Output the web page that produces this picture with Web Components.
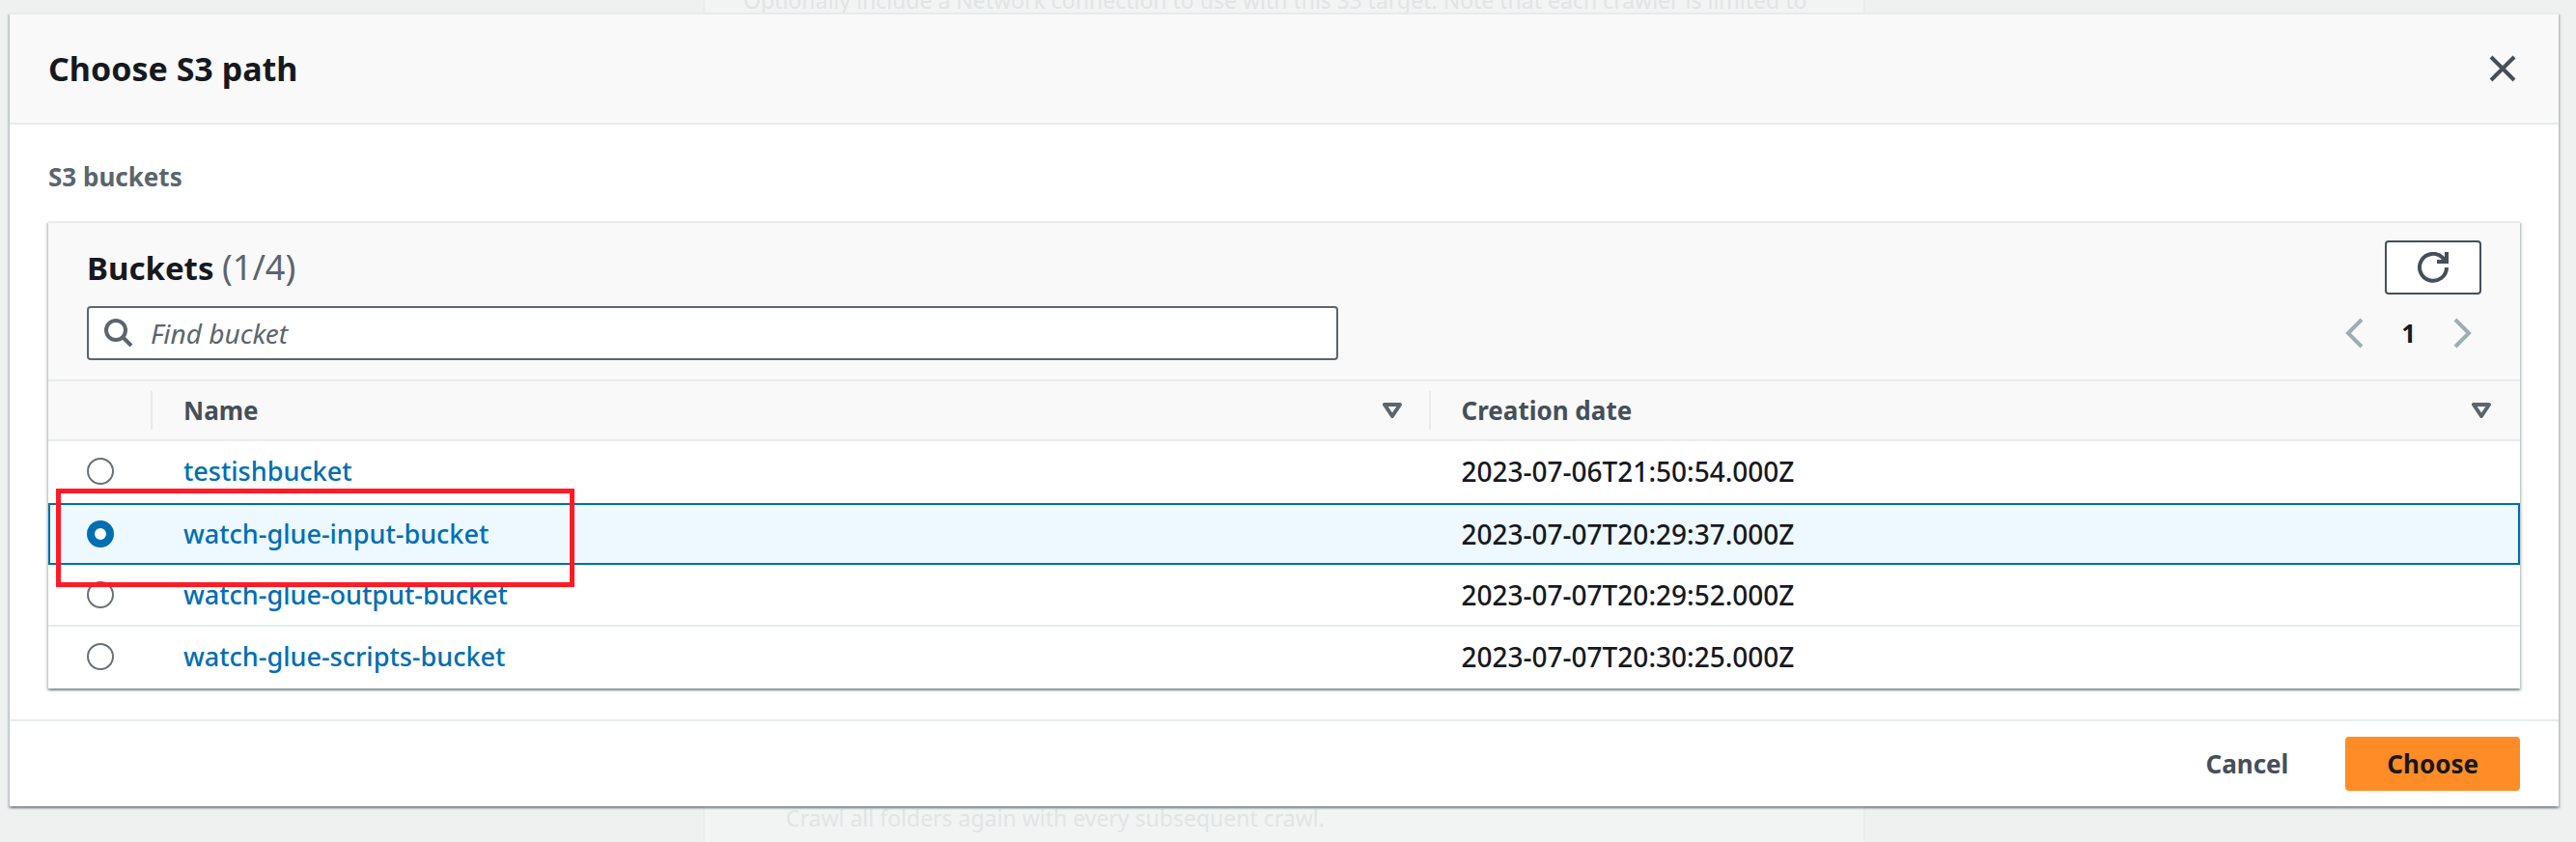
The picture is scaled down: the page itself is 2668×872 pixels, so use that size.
<!DOCTYPE html>
<html lang="en">
<head>
<meta charset="utf-8">
<title>Choose S3 path</title>
<style>
  html, body { margin: 0; }
  body {
    background: #eff1f1;
    color: #16191f;
    font-family: "Noto Sans", "Open Sans", sans-serif;
    font-size: 26px;
    line-height: 36px;
  }
</style>
</head>
<body>
<app-stage>
  <crawler-page slot="page"></crawler-page>
  <path-dialog heading="Choose S3 path">
    <bucket-panel></bucket-panel>
    <ui-button slot="actions" variant="link">Cancel</ui-button>
    <ui-button slot="actions" variant="primary">Choose</ui-button>
  </path-dialog>
</app-stage>

<script>
const define = (name, html, setup) => {
  const template = document.createElement('template');
  template.innerHTML = html;
  customElements.define(name, class extends HTMLElement {
    constructor() {
      super();
      this.attachShadow({ mode: 'open' }).append(template.content.cloneNode(true));
    }
    connectedCallback() {
      if (setup) setup(this, this.shadowRoot);
    }
  });
};

/* Stacks the dimmed page and the dialog in one grid cell */
define('app-stage', `
  <style>
    :host { display: grid; min-height: 100vh; padding: 0 18px 0 10px; box-sizing: border-box; overflow: hidden; }
    ::slotted(*), .front { grid-area: 1 / 1; min-width: 0; }
    .front { align-self: start; padding: 13px 0 36px; z-index: 1; }
  </style>
  <slot name="page"></slot>
  <div class="front"><slot></slot></div>
`);

/* The crawler form behind the dialog */
define('crawler-page', `
  <style>
    :host {
      display: flex; flex-direction: column; justify-content: space-between;
      justify-self: center; width: 1200px; max-width: 100%;
      background: #f1f4f3; border: solid #eaeded; border-width: 0 2px;
      color: #e1e4e5; font-size: 23px; line-height: 28px;
    }
    p { margin: 0; }
    .hint { margin-top: -14px; padding-left: 40px; white-space: nowrap; }
    .note { padding: 0 0 11px 84px; }
  </style>
  <p class="hint">Optionally include a Network connection to use with this S3 target. Note that each crawler is limited to</p>
  <p class="note">Crawl all folders again with every subsequent crawl.</p>
`);

define('path-dialog', `
  <style>
    :host {
      display: block; background: #fff; border-top: 2px solid #e7ebeb;
      box-shadow: 0 2px 2px rgba(0,28,36,.3), 2px 2px 2px rgba(0,28,36,.15), -2px 2px 2px rgba(0,28,36,.15);
    }
    header {
      display: flex; align-items: center; justify-content: space-between;
      height: 112px; padding: 0 40px; background: #f9f9f9; border-bottom: 2px solid #e7ebeb;
    }
    h1 { margin: 0; font-size: 34px; line-height: 44px; font-weight: 700; }
    .close { display: grid; place-items: center; width: 36px; height: 36px; padding: 0; border: 0; background: none; color: #464f58; }
    section { padding: 36px 40px 32px; }
    footer {
      display: flex; justify-content: flex-end; gap: 16px;
      padding: 16px 40px; border-top: 2px solid #e7ebeb;
    }
  </style>
  <header>
    <h1></h1>
    <button class="close" type="button" aria-label="Close">
      <svg width="32" height="32" viewBox="0 0 32 32" fill="none" stroke="currentColor" stroke-width="4"><path d="M4 4 28 28M28 4 4 28"/></svg>
    </button>
  </header>
  <section><slot></slot></section>
  <footer><slot name="actions"></slot></footer>
`, (el, root) => { root.querySelector('h1').textContent = el.getAttribute('heading'); });

define('ui-button', `
  <style>
    :host { display: block; }
    button {
      height: 56px; padding: 0 41px; border: 2px solid transparent; border-radius: 4px;
      background: none; color: #464f58; font: inherit; font-weight: 700;
    }
    :host([variant="primary"]) button { background: #ff8c27; border-color: #ff8c27; color: #16191f; }
  </style>
  <button type="button"><slot></slot></button>
`);

define('bucket-panel', `
  <style>
    :host { display: block; }
    h2 { margin: 0 0 28px; font-size: 26px; line-height: 36px; color: #5b656d; }
    .card {
      background: #fff; border-top: 2px solid #e7ebeb;
      box-shadow: 0 2px 2px rgba(0,28,36,.3), 2px 2px 2px rgba(0,28,36,.15), -2px 2px 2px rgba(0,28,36,.15);
    }
    .tools { display: grid; gap: 12px; padding: 18px 40px 20px; background: #f9f9f9; }
    .row { display: flex; align-items: center; justify-content: space-between; height: 56px; }
    h3 { margin: 0; font-size: 33px; line-height: 44px; }
    h3 span { font-size: 36px; font-weight: 400; color: #5b656d; }
    .refresh {
      display: grid; place-items: center; width: 100px; height: 56px; padding: 0;
      background: #fff; border: 2px solid #464f58; border-radius: 4px; color: #464f58;
    }
  </style>
  <h2>S3 buckets</h2>
  <div class="card">
    <div class="tools">
      <div class="row">
        <h3>Buckets <span>(1/4)</span></h3>
        <button class="refresh" type="button" aria-label="Refresh">
          <svg width="32" height="32" viewBox="0 0 32 32" fill="none" stroke="currentColor" stroke-width="4"><path d="M30 16A14 14 0 1 1 26 6l3 4"/><path d="M30 0v10H20"/></svg>
        </button>
      </div>
      <div class="row">
        <search-field label="Find bucket"></search-field>
        <page-nav></page-nav>
      </div>
    </div>
    <bucket-table></bucket-table>
  </div>
`);

define('search-field', `
  <style>
    :host { display: block; flex: 0 1 1296px; min-width: 0; }
    label {
      display: flex; align-items: center; gap: 18px; height: 52px; padding: 0 16px;
      background: #fff; border: 2px solid #5b656d; border-radius: 4px; color: #5b656d;
    }
    svg { flex: none; }
    input { flex: 1; min-width: 0; height: 48px; padding: 0; border: 0; outline: 0; background: none; color: #16191f; font: inherit; font-size: 28px; }
    input::placeholder { color: #5b656d; font-style: italic; opacity: 1; }
  </style>
  <label>
    <svg width="30" height="30" viewBox="0 0 30 30" fill="none" stroke="currentColor" stroke-width="4"><circle cx="12" cy="12" r="10"/><path d="m19 19 9 9"/></svg>
    <input type="text">
  </label>
`, (el, root) => {
  const input = root.querySelector('input');
  input.placeholder = el.getAttribute('label');
  input.setAttribute('aria-label', el.getAttribute('label'));
});

define('page-nav', `
  <style>
    :host { display: flex; align-items: center; gap: 28px; }
    button { display: grid; place-items: center; width: 40px; height: 40px; padding: 0; border: 0; background: none; color: #9dafb0; }
    .page { width: auto; color: #16191f; font: inherit; font-weight: 700; }
  </style>
  <button type="button" aria-label="Previous page" disabled><svg width="20" height="32" viewBox="0 0 20 32" fill="none" stroke="currentColor" stroke-width="4"><path d="M17 2 3 16l14 14"/></svg></button>
  <button type="button" class="page" aria-current="page">1</button>
  <button type="button" aria-label="Next page" disabled><svg width="20" height="32" viewBox="0 0 20 32" fill="none" stroke="currentColor" stroke-width="4"><path d="m3 2 14 14L3 30"/></svg></button>
`);

const buckets = [
  ['testishbucket', '2023-07-06T21:50:54.000Z'],
  ['watch-glue-input-bucket', '2023-07-07T20:29:37.000Z', true],
  ['watch-glue-output-bucket', '2023-07-07T20:29:52.000Z'],
  ['watch-glue-scripts-bucket', '2023-07-07T20:30:25.000Z'],
];
const sortIcon = '<svg width="20" height="16" viewBox="0 0 20 16" fill="none" stroke="currentColor" stroke-width="4" stroke-linejoin="round"><path d="M2 2h16l-8 12z"/></svg>';

define('bucket-table', `
  <style>
    :host { display: block; }
    table { width: 100%; table-layout: fixed; border-collapse: separate; border-spacing: 0; }
    th, td { height: 64px; box-sizing: border-box; padding: 0 30px 0 32px; text-align: left; vertical-align: middle; }
    th { background: #f9f9f9; border: solid #e7ebeb; border-width: 2px 0; color: #464f58; font-weight: 700; }
    .pick { width: 108px; padding: 0 0 0 40px; }
    .name { width: 51.7%; }
    .head { display: flex; align-items: center; justify-content: space-between; }
    th.pick, th.name {
      background: linear-gradient(#e7ebeb, #e7ebeb) right center / 2px 40px no-repeat #f9f9f9;
    }
    th .sort { display: grid; padding: 0; border: 0; background: none; color: #5b656d; }
    td { border-bottom: 2px solid #e7ebeb; font-weight: 500; }
    td:last-child { font-size: 28px; }
    tr:last-child td, tr:has(+ .selected) td { border-color: transparent; }
    .selected td { background: #edf8ff; border-top: 2px solid #006eb3; border-bottom-color: #006eb3; }
    .selected td:first-child { position: relative; border-left: 2px solid #006eb3; padding-left: 38px; }
    .selected td:last-child { border-right: 2px solid #006eb3; }
    a { color: #006eb3; font-size: 27px; text-decoration: none; }
    input {
      display: block; appearance: none; box-sizing: border-box; width: 28px; height: 28px; margin: 0;
      background: #fff; border: 2px solid #687078; border-radius: 50%;
    }
    input:checked { border: 8px solid #006eb3; }
    .marker {
      position: absolute; z-index: 1; left: 6px; top: -17px; box-sizing: border-box;
      width: 537px; height: 102px; border: 5px solid #ff1a25; pointer-events: none;
    }
  </style>
  <table>
    <thead><tr>
      <th class="pick" scope="col" aria-label="Selection"></th>
      <th class="name" scope="col"><div class="head">Name<button class="sort" type="button" aria-label="Sort by name">${sortIcon}</button></div></th>
      <th scope="col"><div class="head">Creation date<button class="sort" type="button" aria-label="Sort by creation date">${sortIcon}</button></div></th>
    </tr></thead>
    <tbody>${buckets.map(([name, date, on]) => `
      <tr${on ? ' class="selected"' : ''}>
        <td class="pick"><input type="radio" name="bucket" aria-label="${name}"${on ? ' checked' : ''}>${on ? '<span class="marker"></span>' : ''}</td>
        <td class="name"><a href="#${name}">${name}</a></td>
        <td>${date}</td>
      </tr>`).join('')}
    </tbody>
  </table>
`);
</script>
</body>
</html>
